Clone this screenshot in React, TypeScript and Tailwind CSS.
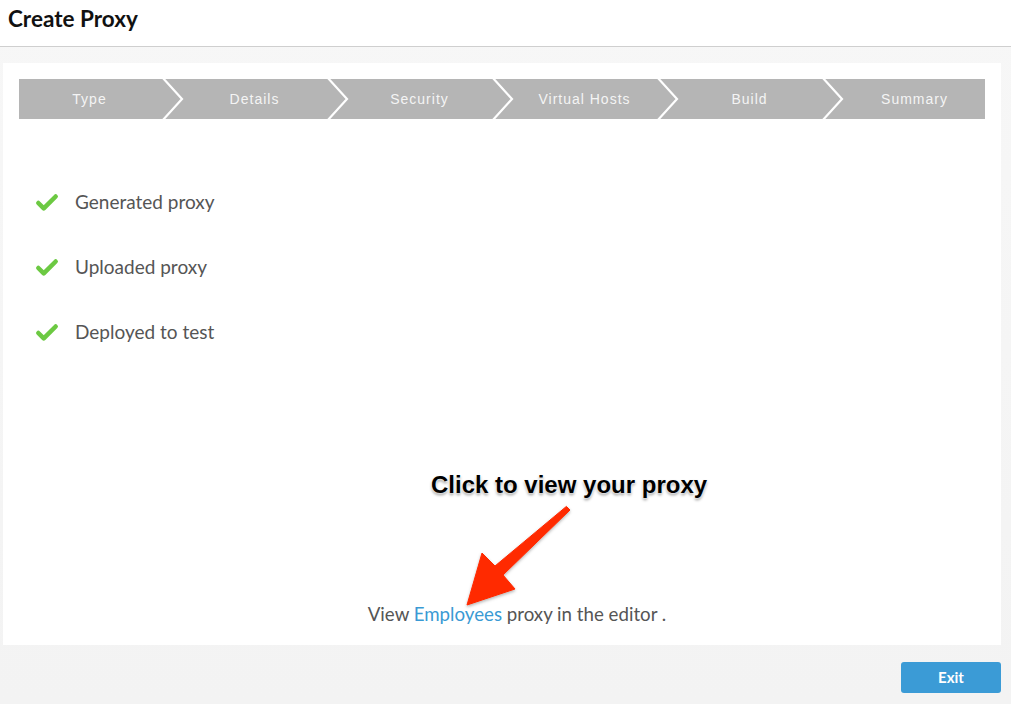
import { Check } from 'lucide-react';

const steps = ['Type', 'Details', 'Security', 'Virtual Hosts', 'Build', 'Summary'];
const done = ['Generated proxy', 'Uploaded proxy', 'Deployed to test'];

function Stepper() {
  return (
    <div className="h-[40px] bg-[#b5b5b5] overflow-hidden">
      <div className="flex h-full -ml-[12px]">
        {steps.map((s, i) => (
          <div key={s} className="relative w-[165px] shrink-0 h-full flex items-center justify-center">
            <span className="text-[14px] tracking-[1px] text-[#f4f4f4] font-['Liberation_Sans',Arial,sans-serif]">
              {s}
            </span>
            {i < steps.length - 1 && (
              <svg className="absolute right-[-13px] top-0 z-10" width="26" height="40" viewBox="0 0 26 40">
                <polyline points="3,-2 23,20 3,42" fill="none" stroke="#fff" strokeWidth="2.2" />
              </svg>
            )}
          </div>
        ))}
      </div>
    </div>
  );
}

function Callout() {
  return (
    <>
      <div
        className="absolute left-[431px] top-[467px] text-[24px] font-bold text-black font-['Liberation_Sans',Arial,sans-serif]"
        style={{ textShadow: '0 0 2px #fff, 0 0 3px #fff, 0 2px 3px rgba(0,0,0,0.45)' }}
      >
        Click to view your proxy
      </div>
      <svg className="absolute left-[455px] top-[495px]" width="125" height="120" viewBox="455 495 125 120">
        <defs>
          <filter id="sh" x="-20%" y="-20%" width="140%" height="140%">
            <feDropShadow dx="0" dy="1.5" stdDeviation="1.5" floodColor="#000" floodOpacity="0.3" />
          </filter>
        </defs>
        <polygon
          points="566.4,506.4 495,566 482,553 467,605 515,589 503,575 570,510"
          fill="#ff2a00"
          stroke="#ff2a00"
          strokeWidth="1"
          strokeLinejoin="round"
          filter="url(#sh)"
        />
      </svg>
    </>
  );
}

export default function App() {
  return (
    <div className="relative w-[1011px] h-[704px] bg-gradient-to-b from-[#f7f7f7] to-[#f3f3f3] font-['Lato','Open_Sans',sans-serif] overflow-hidden">
      <header className="h-[47px] bg-white border-b border-[#cfcfcf] px-[8px] pt-[2px]">
        <h1 className="text-[22.5px] font-bold text-[#111]">Create Proxy</h1>
      </header>

      <div className="pt-[16px] pl-[3px] pr-[10px]">
        <div className="h-[582px] bg-white p-[16px] flex flex-col">
          <Stepper />

          <ul className="mt-[51px] pl-[15px]">
            {done.map((d) => (
              <li key={d} className="h-[65px] flex items-center gap-[15px]">
                <Check className="size-[26px] text-[#6cc942]" strokeWidth={4.2} />
                <span className="text-[19px] text-[#555]">{d}</span>
              </li>
            ))}
          </ul>

          <p className="mt-auto mb-[3px] pl-[30px] text-center text-[18.7px] leading-[24px] text-[#555]">
            View <a className="text-[#3a9ad4]">Employees</a> proxy in the editor .
          </p>
        </div>
      </div>

      <div className="flex justify-end pr-[10px] pt-[17px]">
        <button className="w-[100px] h-[31px] rounded-[3px] bg-[#3b9bd6] text-white text-[15px] font-bold">
          Exit
        </button>
      </div>

      <Callout />
    </div>
  );
}
